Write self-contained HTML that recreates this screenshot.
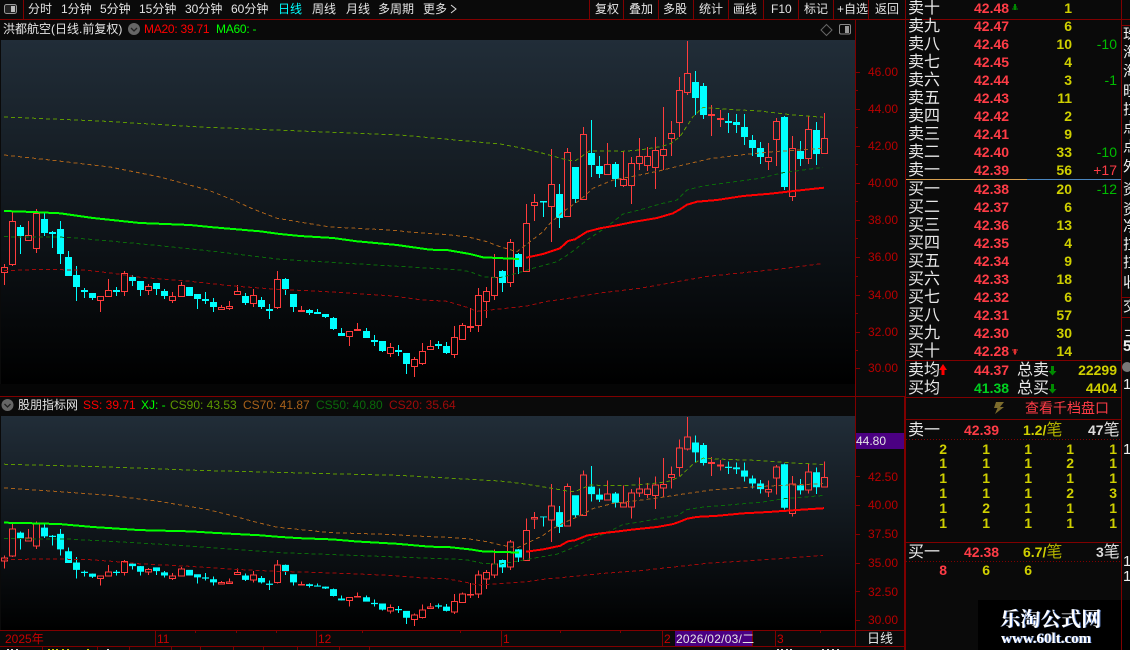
<!DOCTYPE html>
<html><head><meta charset="utf-8"><style>
html,body{margin:0;padding:0;background:#0a0a0a}
#p{position:relative;width:1130px;height:650px;overflow:hidden;background:#0a0a0a;font-family:"Liberation Sans","WenQuanYi Zen Hei","Noto Sans CJK SC",sans-serif;color:#e6e6e6}
.a{position:absolute}
.t{position:absolute;white-space:nowrap;line-height:16px;height:16px}
.tb{font-size:12px;top:1px;color:#e4e4e4}
.ax{font-size:12px;color:#b80000;left:868px}
.w{font-size:16px;color:#e8e8e8;left:908px;margin-top:1px}
.pr{font-size:14px;font-weight:bold;color:#ff3c46;left:974px}
.q{font-size:14px;font-weight:bold;color:#d0d000;width:60px;left:1012px;text-align:right}
.c{font-size:14px;color:#00bc00;width:50px;left:1067px;text-align:right}
.d{font-size:14px;font-weight:bold;color:#d0d000;width:20px;text-align:right}
.ttl{font-size:12px}
.r{font-size:15px;color:#eee;left:1123px;width:7px;overflow:hidden}
</style></head><body><div id="p">
<div class="a" style="left:1px;top:40px;width:854px;height:344px;background:linear-gradient(#212d38,#000)"></div>
<div class="a" style="left:0;top:384px;width:855px;height:12px;background:#050505"></div>
<div class="a" style="left:1px;top:416px;width:854px;height:214px;background:linear-gradient(#212d38,#000)"></div>
<div class="a" style="left:978px;top:600px;width:152px;height:50px;background:#000"></div>

<svg class="a" style="left:0;top:0" width="1130" height="650" viewBox="0 0 1130 650" fill="none">
<defs><g id="chart">
<path vector-effect="non-scaling-stroke" stroke="#ff3c3c" shape-rendering="crispEdges" d="M4.5 264V267.5m-3 0h6v5h-6zm3 5V285M12.5 211V221.5m-3 0h6v43h-6zm3 43V266M28.5 221V235.5m-3 0h6v5h-6zm3 5V241M36.5 209V213.5m-3 0h6v35h-6zm3 35V253M100.5 296V296.5m-3 0h6v4h-6zm3 4V312M108.5 279V290.5m-3 0h6v6h-6zm3 6V297M124.5 271V273.5m-3 0h6v18h-6zm3 18V296M148.5 284V286.5m-3 0h6v4h-6zm3 4V295M172.5 292V296.5m-3 0h6v4h-6zm3 4V303M181.5 282V285.5m-3 0h6v11h-6zm3 11V297M221.5 305V307.5m-3 0h6v2h-6zm3 2V310M229.5 301V306.5m-3 0h6v2h-6zm3 2V310M237.5 285V291.5m-3 0h6v3h-6zm3 3V295M253.5 289V295.5m-3 0h6v8h-6zm3 8V307M277.5 271V279.5m-3 0h6v28h-6zm3 28V309M301.5 306V310.5m-3 0h6v1h-6zm3 1V312M349.5 331V331.5m-3 0h6v5h-6zm3 5V346M357.5 323V329.5m-3 0h6v1h-6zm3 1V330M390.5 343V347.5m-3 0h6v6h-6zm3 6V357M414.5 357V359.5m-3 0h6v7h-6zm3 7V377M422.5 343V351.5m-3 0h6v12h-6zm3 12V365M430.5 340V346.5m-3 0h6v3h-6zm3 3V350M454.5 326V337.5m-3 0h6v17h-6zm3 17V358M462.5 323V325.5m-3 0h6v14h-6zm3 14V340M470.5 308V326.5m-3 0h6v1h-6zm3 1V332M478.5 288V295.5m-3 0h6v30h-6zm3 30V332M486.5 287V291.5m-3 0h6v10h-6zm3 10V318M494.5 254V277.5m-3 0h6v18h-6zm3 18V300M510.5 239V242.5m-3 0h6v40h-6zm3 40V287M526.5 204V223.5m-3 0h6v48h-6zm3 48V272M534.5 194V202.5m-3 0h6v3h-6zm3 3V221M551.5 149V184.5m-3 0h6v22h-6zm3 22V242M567.5 148V152.5m-3 0h6v64h-6zm3 64V217M583.5 127V134.5m-3 0h6v65h-6zm3 65V200M607.5 143V164.5m-3 0h6v10h-6zm3 10V175M623.5 151V179.5m-3 0h6v6h-6zm3 6V187M631.5 157V163.5m-3 0h6v22h-6zm3 22V204M639.5 138V156.5m-3 0h6v7h-6zm3 7V170M647.5 147V156.5m-3 0h6v9h-6zm3 9V171M655.5 137V150.5m-3 0h6v17h-6zm3 17V189M663.5 107V149.5m-3 0h6v6h-6zm3 6V170M671.5 121V133.5m-3 0h6v5h-6zm3 5V156M679.5 77V90.5m-3 0h6v32h-6zm3 32V137M687.5 41V73.5m-3 0h6v19h-6zm3 19V95M711.5 105V114.5m-3 0h6v1h-6zm3 1V136M720.5 110V118.5m-3 0h6v1h-6zm3 1V127M768.5 143V157.5m-3 0h6v4h-6zm3 4V170M776.5 118V121.5m-3 0h6v18h-6zm3 18V166M792.5 136V148.5m-3 0h6v48h-6zm3 48V201M808.5 116V129.5m-3 0h6v29h-6zm3 29V164M824.5 113V138.5m-3 0h6v15h-6zm3 15V154"/>
<path vector-effect="non-scaling-stroke" stroke="#00ffff" shape-rendering="crispEdges" d="M20.5 225V254M44.5 213V236M52.5 231V248M60.5 221V264M68.5 251V276M76.5 266V301M84.5 288V298M92.5 293V300M116.5 287V296M132.5 275V286M140.5 281V296M156.5 283V295M164.5 289V299M197.5 294V309M205.5 292V304M213.5 298V312M245.5 293V305M261.5 297V309M269.5 304V319M285.5 278V295M293.5 294V312M309.5 309V315M317.5 309V314M325.5 314V318M333.5 317V330M341.5 328V336M366.5 328V338M374.5 335V346M382.5 341V352M398.5 345V356M406.5 353V374M438.5 341V349M446.5 342V354M502.5 270V292M518.5 253V274M543.5 201V217M559.5 184V228M575.5 167V203M591.5 120V177M599.5 156V178M615.5 162V187M695.5 71V115M703.5 83V119M728.5 113V133M736.5 114V133M744.5 114V145M752.5 135V156M760.5 142V164M784.5 116V190M800.5 141V166M816.5 122V165"/>
<path fill="#00ffff" d="M17 227h7v9h-7zM41 219h7v14h-7zM49 232h7v2h-7zM57 229h7v25h-7zM65 257h7v19h-7zM73 275h7v12h-7zM81 290h7v2h-7zM89 293h7v5h-7zM113 290h7v2h-7zM129 277h7v4h-7zM137 281h7v9h-7zM153 283h7v6h-7zM161 291h7v5h-7zM186 287h7v9h-7zM194 294h7v5h-7zM202 299h7v2h-7zM210 302h7v5h-7zM242 296h7v7h-7zM258 300h7v7h-7zM266 309h7v2h-7zM282 279h7v10h-7zM290 294h7v13h-7zM306 310h7v3h-7zM314 312h7v2h-7zM322 314h7v3h-7zM330 318h7v11h-7zM338 333h7v3h-7zM363 331h7v7h-7zM371 340h7v2h-7zM379 341h7v10h-7zM395 350h7v2h-7zM403 353h7v11h-7zM435 344h7v2h-7zM443 346h7v7h-7zM499 271h7v12h-7zM515 254h7v13h-7zM540 201h7v1.5h-7zM556 194h7v24h-7zM572 167h7v32h-7zM588 153h7v12h-7zM596 166h7v8h-7zM612 164h7v15h-7zM692 82h7v16h-7zM700 86h7v29h-7zM725 121h7v2h-7zM733 122h7v3h-7zM741 127h7v10h-7zM749 140h7v8h-7zM757 148h7v9h-7zM781 117h7v70h-7zM797 151h7v8h-7zM813 130h7v24h-7z"/>
<g shape-rendering="crispEdges">
<path vector-effect="non-scaling-stroke" stroke="#5d9800" stroke-dasharray="4 3" d="M4 117L100 121L200 127L300 131L400 135L500 144L520 147.7L543 153.3L567 160L575 161L590 150.7L623 151.3L640 150L660 146.7L670 144L680 136.7L693 116.7L703 107.3L727 109.3L760 111L793 115L823 117.3"/>
<path vector-effect="non-scaling-stroke" stroke="#a8611a" stroke-dasharray="4 3" d="M4 155L50 160L110 167L160 177L208 190L233 200L253 209L277 218.3L330 227L390 230L413 232.3L443 234.3L467 236.7L487 241.7L500 246.7L517 251.7L530 241.7L543 231.7L550 223.3L563 211.7L580 200L593 188.3L613 180L640 175L660 170.7L683 165L710 158.7L740 155L773 151.7L823 148.3"/>
<path vector-effect="non-scaling-stroke" stroke="#0a6a0a" stroke-dasharray="4 3" d="M4 236.7L67 237.3L113 241.3L160 245.7L213 251.3L280 259.3L347 263.3L393 266L460 270L470 271.7L483 276.7L500 277.7L520 272.3L533 268.3L557 261.7L570 253.3L587 240L607 226.7L623 214L643 209L660 204L677 200L687 190L703 186L727 182.7L760 178.3L783 172.7L823 167.3"/>
<path vector-effect="non-scaling-stroke" stroke="#a00a0a" stroke-dasharray="4 3" d="M4 270.7L43 269.3L87 270.3L113 273.3L140 277.3L187 281L233 286L277 289.3L320 291.3L353 293.3L393 296L420 299.7L447 301.3L467 307.3L477 311.3L497 309.3L527 306L547 301.3L560 299.7L600 293L640 288.3L707 276.4L780 269L823 263.5"/>
<path vector-effect="non-scaling-stroke" stroke="#00ff00" stroke-width="2" d="M4 211L33 212L60 213.3L93 218L140 223L190 225L213 227.3L260 231.3L280 234L300 236L333 238L357 241.3L397 245L430 249.7L447 250L470 254L483 257.3L519 259"/>
<path vector-effect="non-scaling-stroke" stroke="#ff0000" stroke-width="2" d="M526 257.7L543 254L560 248.3L568 241L575 239.3L587 231.7L600 228.3L617 225.3L633 222L657 218L673 213.3L680 209.3L687 204.7L697 201.7L717 200L743 196L770 193.7L800 190.3L824 187.7"/>
</g>
</g></defs>
<use href="#chart"/>
<use href="#chart" transform="translate(0 391.5) scale(1 .6216)"/>
<g stroke="#800000" shape-rendering="crispEdges">
<path d="M0 19.5H1130M905.5 0V650M904.5 396V650M855.5 20V646M0 396.5H905M0 630.5H905M0 646.5H905M23.5 0V19M589.5 0V19M623.5 0V19M658.5 0V19M693.5 0V19M728.5 0V19M763.5 0V19M798.5 0V19M833.5 0V19M868.5 0V19M1121.5 0V650M905 179.5H1121M905 360.5H1121M905 397.5H1121M905 419.5H1121M905 542.5H1121M1122 25.5H1130M1122 297.5H1130M1122 317.5H1130M155.5 630V646M316.5 630V646M501.5 630V646M662.5 630V646M752.5 630V646M775.5 630V646M42.5 646V650M97.5 646V650M129.5 646V650M171.5 646V650M200.5 646V650M233.5 646V650M263.5 646V650M297.5 646V650M339.5 646V650M369.5 646V650M195.5 630V633M236.5 630V633M276.5 630V633M362.5 630V633M460.5 630V633M560.5 630V633M620.5 630V633M820.5 630V633"/>
<path d="M856 72.5H860M856 109.5H860M856 146.5H860M856 183.5H860M856 220.5H860M856 257.5H860M856 295.5H860M856 332.5H860M856 368.5H860M856 90.5H858M856 127.5H858M856 164.5H858M856 201.5H858M856 238.5H858M856 276.5H858M856 313.5H858M856 350.5H858M856 476.5H860M856 505.5H860M856 534.5H860M856 563.5H860M856 591.5H860M856 620.5H860"/>
<path stroke-dasharray="1 2" d="M906 439.5H1120M906 561.5H1120"/>
</g>
<path d="M906 179.5H1027" stroke="#d8a050" shape-rendering="crispEdges"/><path d="M1027 179.5H1121" stroke="#4a86c0" shape-rendering="crispEdges"/>
<path d="M7 649.500h2M11 649.500h2M16 649.500h2M777 649.500h2M781 649.500h2M786 649.500h2M790 649.500h2M822 649.500h2M827 649.500h2M832 649.500h2M837 649.500h2M107 649.500h2" stroke="#ddd" shape-rendering="crispEdges"/>
<path d="M48 649.500h2M52 649.500h2M56 649.500h2M62 649.500h2M67 649.500h2M87 649.500h2" stroke="#d0d000" shape-rendering="crispEdges"/>
<rect x="4.5" y="4.5" width="12" height="9" rx="2" stroke="#999" fill="#222"/><rect x="11" y="6" width="4" height="6" fill="#bbb"/>
<path d="M826.5 24.5L832 30L826.5 35.5L821 30Z" stroke="#666"/>
<rect x="839.5" y="24.5" width="11" height="9.5" rx="1.5" stroke="#888"/><rect x="845" y="26" width="4" height="7" fill="#999"/>
<circle cx="134" cy="29" r="6" fill="#666"/><path d="M131 28L134 31L137 28" stroke="#222" stroke-width="1.3"/>
<circle cx="7.5" cy="405" r="6" fill="#666"/><path d="M4.5 404L7.5 407L10.5 404" stroke="#222" stroke-width="1.3"/>
<circle cx="1127" cy="367" r="5" fill="#777"/>
<path d="M451 5L456 9L451 13" stroke="#ddd"/>
<path d="M1012 9H1018M1013 7H1017M1014 5H1016" stroke="#008a00" shape-rendering="crispEdges"/><rect x="1014" y="4" width="2" height="6" fill="#008a00"/>
<path d="M1012 350H1018M1013 352H1017M1014 354H1016" stroke="#e03030" shape-rendering="crispEdges"/><rect x="1014" y="349" width="2" height="5" fill="#e03030"/>
<path d="M943 364L947 370H944.500V375H941.500V370H939Z" fill="#f00"/>
<path d="M1051 366H1054V371H1056.500L1052.500 375.500L1048.500 371H1051Z" fill="#008a00"/>
<path d="M1051 384H1054V389H1056.500L1052.500 393.500L1048.500 389H1051Z" fill="#008a00"/>
<path d="M996 402H1004L1000 407H1004L995 414L997.500 408H994Z" fill="#7d6c2c"/>
</svg>

<span class="t tb" style="left:28px">分时</span>
<span class="t tb" style="left:61px">1分钟</span>
<span class="t tb" style="left:100px">5分钟</span>
<span class="t tb" style="left:139px">15分钟</span>
<span class="t tb" style="left:185px">30分钟</span>
<span class="t tb" style="left:231px">60分钟</span>
<span class="t tb" style="left:278px;color:#00ffff">日线</span>
<span class="t tb" style="left:312px">周线</span>
<span class="t tb" style="left:346px">月线</span>
<span class="t tb" style="left:378px">多周期</span>
<span class="t tb" style="left:423px">更多</span>
<span class="t tb" style="left:595px">复权</span>
<span class="t tb" style="left:629px">叠加</span>
<span class="t tb" style="left:663px">多股</span>
<span class="t tb" style="left:699px">统计</span>
<span class="t tb" style="left:733px">画线</span>
<span class="t tb" style="left:771px">F10</span>
<span class="t tb" style="left:804px">标记</span>
<span class="t tb" style="left:837px">+自选</span>
<span class="t tb" style="left:875px">返回</span>

<span class="t ttl" style="left:3px;top:21px;color:#e4e4e4">洪都航空(日线.前复权)</span>
<span class="t ttl" style="left:144px;top:21px;color:#f00;letter-spacing:-.25px">MA20: 39.71</span>
<span class="t ttl" style="left:216px;top:21px;color:#0f0;letter-spacing:-.25px">MA60: -</span>
<span class="t ttl" style="left:18px;top:397px;color:#e4e4e4">股朋指标网</span>
<span class="t ttl" style="left:83px;top:397px;color:#f00">SS: 39.71</span>
<span class="t ttl" style="left:141px;top:397px;color:#0f0">XJ: -</span>
<span class="t ttl" style="left:170px;top:397px;color:#5d9800">CS90: 43.53</span>
<span class="t ttl" style="left:243px;top:397px;color:#a8611a">CS70: 41.87</span>
<span class="t ttl" style="left:316px;top:397px;color:#0a6a0a">CS50: 40.80</span>
<span class="t ttl" style="left:389px;top:397px;color:#a00a0a">CS20: 35.64</span>

<span class="t ax" style="top:64px">46.00</span>
<span class="t ax" style="top:101px">44.00</span>
<span class="t ax" style="top:138px">42.00</span>
<span class="t ax" style="top:175px">40.00</span>
<span class="t ax" style="top:212px">38.00</span>
<span class="t ax" style="top:249px">36.00</span>
<span class="t ax" style="top:287px">34.00</span>
<span class="t ax" style="top:324px">32.00</span>
<span class="t ax" style="top:360px">30.00</span>
<span class="t ax" style="top:469px">42.50</span>
<span class="t ax" style="top:497px">40.00</span>
<span class="t ax" style="top:526px">37.50</span>
<span class="t ax" style="top:555px">35.00</span>
<span class="t ax" style="top:584px">32.50</span>
<span class="t ax" style="top:612px">30.00</span>
<div class="a" style="left:856px;top:433px;width:48px;height:16px;background:#4b0082"></div>
<span class="t" style="left:856px;top:433px;font-size:12px;color:#e6e6e6">44.80</span>

<span class="t" style="left:5px;top:631px;font-size:12px;color:#c80000">2025年</span>
<span class="t" style="left:157px;top:631px;font-size:12px;color:#c80000">11</span>
<span class="t" style="left:318px;top:631px;font-size:12px;color:#c80000">12</span>
<span class="t" style="left:503px;top:631px;font-size:12px;color:#c80000">1</span>
<span class="t" style="left:664px;top:631px;font-size:12px;color:#c80000">2</span>
<span class="t" style="left:777px;top:631px;font-size:12px;color:#c80000">3</span>
<div class="a" style="left:675px;top:631px;width:77px;height:15px;background:#4b0082"></div>
<span class="t" style="left:676px;top:631px;font-size:12px;color:#e6e6e6;letter-spacing:.25px">2026/02/03/二</span>
<span class="t" style="left:867px;top:631px;font-size:13px;color:#e6e6e6">日线</span>

<span class="t w" style="top:0">卖十</span><span class="t pr" style="top:0">42.48</span><span class="t q" style="top:0">1</span>
<span class="t w" style="top:18px">卖九</span><span class="t pr" style="top:18px">42.47</span><span class="t q" style="top:18px">6</span>
<span class="t w" style="top:36px">卖八</span><span class="t pr" style="top:36px">42.46</span><span class="t q" style="top:36px">10</span><span class="t c" style="top:36px">-10</span>
<span class="t w" style="top:54px">卖七</span><span class="t pr" style="top:54px">42.45</span><span class="t q" style="top:54px">4</span>
<span class="t w" style="top:72px">卖六</span><span class="t pr" style="top:72px">42.44</span><span class="t q" style="top:72px">3</span><span class="t c" style="top:72px">-1</span>
<span class="t w" style="top:90px">卖五</span><span class="t pr" style="top:90px">42.43</span><span class="t q" style="top:90px">11</span>
<span class="t w" style="top:108px">卖四</span><span class="t pr" style="top:108px">42.42</span><span class="t q" style="top:108px">2</span>
<span class="t w" style="top:126px">卖三</span><span class="t pr" style="top:126px">42.41</span><span class="t q" style="top:126px">9</span>
<span class="t w" style="top:144px">卖二</span><span class="t pr" style="top:144px">42.40</span><span class="t q" style="top:144px">33</span><span class="t c" style="top:144px">-10</span>
<span class="t w" style="top:162px">卖一</span><span class="t pr" style="top:162px">42.39</span><span class="t q" style="top:162px">56</span><span class="t c" style="top:162px;color:#ff3c46">+17</span>
<span class="t w" style="top:181px">买一</span><span class="t pr" style="top:181px">42.38</span><span class="t q" style="top:181px">20</span><span class="t c" style="top:181px">-12</span>
<span class="t w" style="top:199px">买二</span><span class="t pr" style="top:199px">42.37</span><span class="t q" style="top:199px">6</span>
<span class="t w" style="top:217px">买三</span><span class="t pr" style="top:217px">42.36</span><span class="t q" style="top:217px">13</span>
<span class="t w" style="top:235px">买四</span><span class="t pr" style="top:235px">42.35</span><span class="t q" style="top:235px">4</span>
<span class="t w" style="top:253px">买五</span><span class="t pr" style="top:253px">42.34</span><span class="t q" style="top:253px">9</span>
<span class="t w" style="top:271px">买六</span><span class="t pr" style="top:271px">42.33</span><span class="t q" style="top:271px">18</span>
<span class="t w" style="top:289px">买七</span><span class="t pr" style="top:289px">42.32</span><span class="t q" style="top:289px">6</span>
<span class="t w" style="top:307px">买八</span><span class="t pr" style="top:307px">42.31</span><span class="t q" style="top:307px">57</span>
<span class="t w" style="top:325px">买九</span><span class="t pr" style="top:325px">42.30</span><span class="t q" style="top:325px">30</span>
<span class="t w" style="top:343px">买十</span><span class="t pr" style="top:343px">42.28</span><span class="t q" style="top:343px">14</span>

<span class="t w" style="top:362px">卖均</span><span class="t pr" style="top:362px">44.37</span><span class="t w" style="top:362px;left:1017px">总卖</span><span class="t q" style="top:362px;left:1057px">22299</span>
<span class="t w" style="top:380px">买均</span><span class="t pr" style="top:380px;color:#00d020">41.38</span><span class="t w" style="top:380px;left:1017px">总买</span><span class="t q" style="top:380px;left:1057px">4404</span>
<span class="t" style="left:1025px;top:400px;font-size:14px;color:#ff3c46">查看千档盘口</span>

<span class="t w" style="top:422px">卖一</span><span class="t pr" style="top:422px;left:964px">42.39</span><span class="t q" style="top:422px;left:1023px;width:auto;color:#d0d000">1.2/<span style="font-weight:normal;font-size:16px;color:#b0b000">笔</span></span><span class="t" style="top:422px;left:1088px;font-size:14px;font-weight:bold;color:#ddd">47<span style="font-weight:normal;font-size:16px">笔</span></span>
<span class="t d" style="top:441px;left:927px">2</span><span class="t d" style="top:441px;left:970px">1</span><span class="t d" style="top:441px;left:1012px">1</span><span class="t d" style="top:441px;left:1054px">1</span><span class="t d" style="top:441px;left:1097px">1</span>
<span class="t d" style="top:455px;left:927px">1</span><span class="t d" style="top:455px;left:970px">1</span><span class="t d" style="top:455px;left:1012px">1</span><span class="t d" style="top:455px;left:1054px">2</span><span class="t d" style="top:455px;left:1097px">1</span>
<span class="t d" style="top:470px;left:927px">1</span><span class="t d" style="top:470px;left:970px">1</span><span class="t d" style="top:470px;left:1012px">1</span><span class="t d" style="top:470px;left:1054px">1</span><span class="t d" style="top:470px;left:1097px">1</span>
<span class="t d" style="top:485px;left:927px">1</span><span class="t d" style="top:485px;left:970px">1</span><span class="t d" style="top:485px;left:1012px">1</span><span class="t d" style="top:485px;left:1054px">2</span><span class="t d" style="top:485px;left:1097px">3</span>
<span class="t d" style="top:500px;left:927px">1</span><span class="t d" style="top:500px;left:970px">2</span><span class="t d" style="top:500px;left:1012px">1</span><span class="t d" style="top:500px;left:1054px">1</span><span class="t d" style="top:500px;left:1097px">1</span>
<span class="t d" style="top:515px;left:927px">1</span><span class="t d" style="top:515px;left:970px">1</span><span class="t d" style="top:515px;left:1012px">1</span><span class="t d" style="top:515px;left:1054px">1</span><span class="t d" style="top:515px;left:1097px">1</span>
<span class="t w" style="top:544px">买一</span><span class="t pr" style="top:544px;left:964px">42.38</span><span class="t q" style="top:544px;left:1023px;width:auto">6.7/<span style="font-weight:normal;font-size:16px;color:#b0b000">笔</span></span><span class="t" style="top:544px;left:1096px;font-size:14px;font-weight:bold;color:#ddd">3<span style="font-weight:normal;font-size:16px">笔</span></span>
<span class="t d" style="top:562px;left:927px;color:#ff3c46">8</span><span class="t d" style="top:562px;left:970px">6</span><span class="t d" style="top:562px;left:1012px">6</span>

<span class="t r" style="top:27px">珠</span><span class="t r" style="top:45px">海</span><span class="t r" style="top:64px">海</span><span class="t r" style="top:84px">旺</span><span class="t r" style="top:102px">拉</span><span class="t r" style="top:120px">点</span><span class="t r" style="top:139px">点</span><span class="t r" style="top:159px">外</span><span class="t r" style="top:182px">资</span><span class="t r" style="top:202px">资</span><span class="t r" style="top:219px">净</span><span class="t r" style="top:237px">拉</span><span class="t r" style="top:255px">拉</span><span class="t r" style="top:275px">收</span><span class="t r" style="top:299px">交</span><span class="t r" style="top:329px">三</span><span class="t r" style="top:339px;font-weight:bold">5</span><span class="t r" style="top:377px">1</span><span class="t r" style="top:442px">1</span><span class="t r" style="top:554px">1</span><span class="t r" style="top:569px">1</span>

<span class="t" style="left:1000px;top:608px;height:24px;line-height:24px;font-family:'Liberation Serif','Noto Serif CJK SC',serif;font-weight:bold;font-size:20px;letter-spacing:.3px;color:#fff;text-shadow:1px 0 #6688cc">乐淘公式网</span>
<span class="t" style="left:1001px;top:631px;font-family:'Liberation Serif',serif;font-weight:bold;font-size:15px;color:#fff;text-shadow:1px 0 #6688cc">www.60lt.com</span>
</div></body></html>
